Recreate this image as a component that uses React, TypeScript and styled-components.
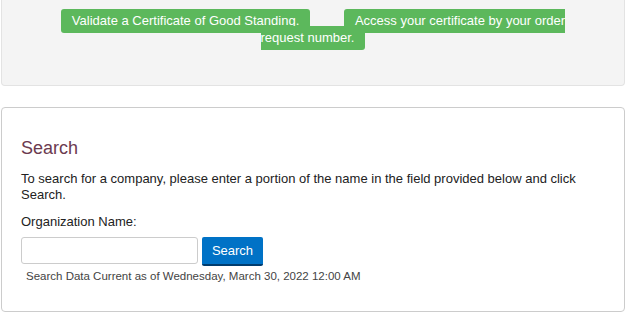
import React from 'react'
import styled, { createGlobalStyle } from 'styled-components'

const GlobalStyle = createGlobalStyle`
  body {
    margin: 0;
    background: #fff;
    font-family: "Liberation Sans", Arial, sans-serif;
    color: #222;
  }
`

const Page = styled.div`
  padding: 0 3px 0 1px;
`

const Well = styled.div`
  background: #f4f4f4;
  border: 1px solid #e3e3e3;
  border-top: 0;
  border-radius: 0 0 4px 4px;
  height: 86px;
  box-sizing: border-box;
  padding-top: 12px;
`

const Links = styled.div`
  max-width: 520px;
  margin: 0 auto;
  text-align: center;
  font-size: 13px;
  line-height: 17px;
`

const Label = styled.a<{ $gap?: boolean }>`
  background: #5cb85c;
  color: #fff;
  text-decoration: none;
  padding: 4px 11px 5px;
  border-radius: 3px;
  margin-right: ${(p) => (p.$gap ? '30px' : '0')};
`

const Panel = styled.div`
  margin-top: 21px;
  border: 1px solid #ccc;
  border-radius: 4px;
  padding: 30px 19px 0;
  height: 205px;
  box-sizing: border-box;
`

const Title = styled.h2`
  margin: 0 0 13px;
  font-size: 18px;
  font-weight: normal;
  color: #6b3a4f;
  line-height: 20px;
`

const Text = styled.p`
  margin: 0 0 11px;
  font-size: 13px;
  line-height: 16px;
`

const Field = styled.label`
  display: block;
  font-size: 13px;
  line-height: 16px;
  margin-bottom: 7px;
`

const Row = styled.div`
  display: flex;
  gap: 4px;
  align-items: flex-start;
`

const Input = styled.input`
  width: 177px;
  height: 27px;
  box-sizing: border-box;
  border: 1px solid #ccc;
  border-radius: 3px;
  padding: 2px 6px;
  font-size: 12px;
`

const Button = styled.button`
  height: 29px;
  width: 61px;
  background: #0072c6;
  color: #fff;
  border: 0;
  border-bottom: 2px solid #003c6e;
  border-radius: 2px;
  font-family: inherit;
  font-size: 13px;
  padding: 0;
`

const Note = styled.div`
  margin: 3px 0 0 5px;
  font-size: 11.5px;
  line-height: 15px;
  color: #444;
`

export default function App() {
  return (
    <Page>
      <GlobalStyle />
      <Well>
        <Links>
          <Label href="#" $gap>Validate a Certificate of Good Standing.</Label>{' '}
          <Label href="#">Access your certificate by your order request number.</Label>
        </Links>
      </Well>
      <Panel>
        <Title>Search</Title>
        <Text>
          To search for a company, please enter a portion of the name in the field provided below and click
          Search.
        </Text>
        <Field htmlFor="org">Organization Name:</Field>
        <Row>
          <Input id="org" type="text" />
          <Button>Search</Button>
        </Row>
        <Note>Search Data Current as of Wednesday, March 30, 2022 12:00 AM</Note>
      </Panel>
    </Page>
  )
}
